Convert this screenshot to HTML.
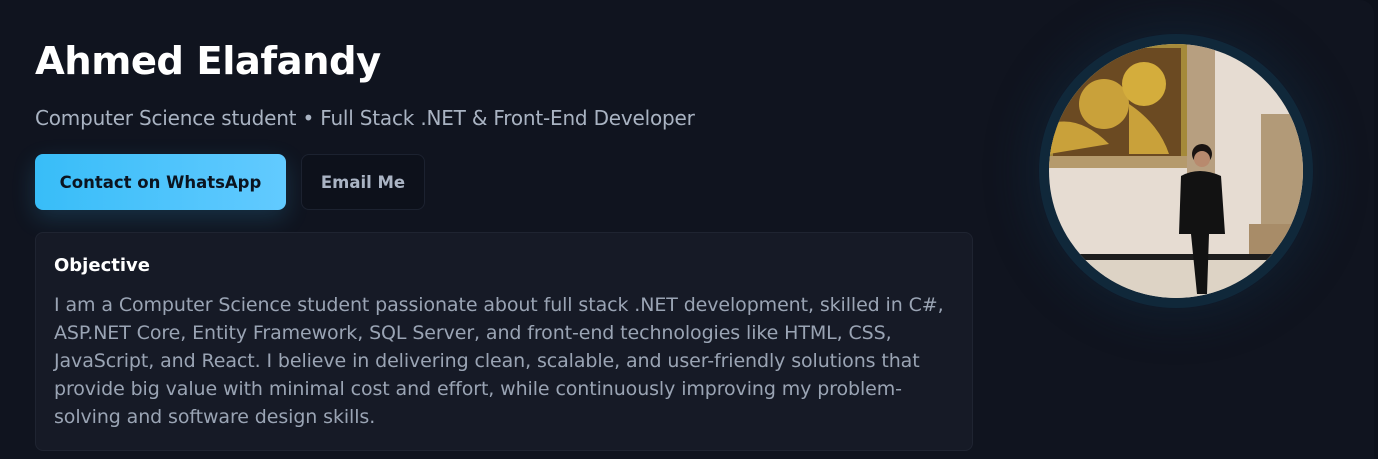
<!DOCTYPE html>
<html><head><meta charset="utf-8"><style>
*{margin:0;padding:0;box-sizing:border-box}
html,body{width:1378px;height:459px;overflow:hidden}
body{background:#0d111b;font-family:"DejaVu Sans","Liberation Sans",sans-serif;position:relative}
.card{position:absolute;left:0;top:0;width:1374px;height:459px;background:#10141f;border-top-right-radius:14px}
h1{position:absolute;left:35px;top:39px;font-size:38.5px;font-weight:bold;color:#fff;letter-spacing:-0.5px}
.sub{position:absolute;left:35px;top:106px;font-size:20px;color:#a9b3c2;white-space:nowrap;letter-spacing:-0.2px}
.b1{position:absolute;left:35px;top:154px;width:251px;height:56px;border-radius:8px;background:linear-gradient(90deg,#38bdf8,#62caff);color:#0b1420;font-weight:bold;font-size:16.5px;display:flex;align-items:center;justify-content:center;box-shadow:0 8px 24px rgba(56,189,248,0.18)}
.b2{position:absolute;left:301px;top:154px;width:124px;height:56px;border-radius:8px;background:#0d111b;border:1px solid #1c2230;color:#aab4c4;font-weight:bold;font-size:16.5px;display:flex;align-items:center;justify-content:center}
.obj{position:absolute;left:35px;top:232px;width:938px;height:219px;background:#161a26;border:1px solid #1f2431;border-radius:8px}
.obj h2{position:absolute;left:18px;top:22px;font-size:18px;font-weight:bold;color:#fff}
.obj p{position:absolute;left:18px;top:58px;font-size:19px;line-height:28px;color:#9aa4b4;white-space:nowrap;letter-spacing:-0.1px}
.ph{position:absolute;left:1039px;top:34px;width:274px;height:274px;border-radius:50%;background:#10283a;box-shadow:0 0 40px 14px rgba(16,45,70,0.35)}
.ph svg{position:absolute;left:10px;top:10px}
</style></head><body>
<div class="card"></div>
<h1>Ahmed Elafandy</h1>
<div class="sub">Computer Science student • Full Stack .NET &amp; Front-End Developer</div>
<div class="b1">Contact on WhatsApp</div>
<div class="b2">Email Me</div>
<div class="obj"><h2>Objective</h2>
<p>I am a Computer Science student passionate about full stack .NET development, skilled in C#,<br>ASP.NET Core, Entity Framework, SQL Server, and front-end technologies like HTML, CSS,<br>JavaScript, and React. I believe in delivering clean, scalable, and user-friendly solutions that<br>provide big value with minimal cost and effort, while continuously improving my problem-<br>solving and software design skills.</p></div>
<div class="ph"><svg width="254" height="254" viewBox="0 0 254 254">
<defs><clipPath id="c"><circle cx="127" cy="127" r="127"/></clipPath></defs>
<g clip-path="url(#c)">
<rect width="254" height="254" fill="#e6dcd2"/>
<rect x="0" y="0" width="140" height="120" fill="#a58a3a"/>
<rect x="4" y="4" width="128" height="108" fill="#6b4a22"/>
<circle cx="55" cy="60" r="25" fill="#c9a13a"/>
<circle cx="95" cy="40" r="22" fill="#d4ad3c"/>
<path d="M0 80 Q30 70 60 100 L0 110Z" fill="#c9a13a"/>
<path d="M80 60 Q110 80 120 110 L80 110Z" fill="#c9a13a"/>
<rect x="0" y="112" width="140" height="12" fill="#b59a6c"/>
<rect x="138" y="0" width="28" height="130" fill="#b79f80"/>
<rect x="212" y="70" width="42" height="200" fill="#b29a78"/>
<rect x="200" y="180" width="54" height="80" fill="#a88c68"/>
<rect x="0" y="210" width="254" height="6" fill="#1d1d1d"/>
<rect x="0" y="216" width="254" height="40" fill="#ddd3c5"/>
<circle cx="153" cy="110" r="10" fill="#1a1412"/>
<circle cx="153" cy="115" r="8" fill="#b88a6e"/>
<path d="M132 132 Q150 122 172 132 L176 190 L160 190 L158 250 L148 250 L142 190 L130 190Z" fill="#121212"/>
</g></svg></div>
</body></html>
